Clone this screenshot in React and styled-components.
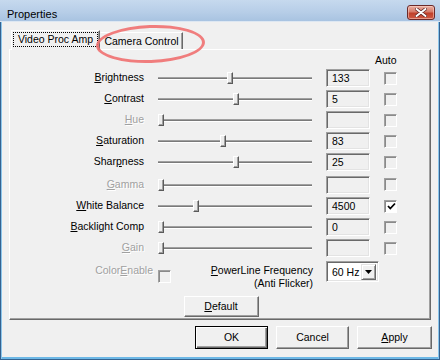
import styled, { createGlobalStyle } from "styled-components";

const GlobalStyle = createGlobalStyle`
  html, body { margin: 0; padding: 0; background: #f0f0f0; }
  body {
    font-family: "Liberation Sans", Arial, sans-serif;
    font-size: 10.5px;
    color: #000;
  }
  * { box-sizing: border-box; }
`;

const controls = [
  { label: <><u>B</u>rightness</>, value: "133", pos: 0.466 },
  { label: <><u>C</u>ontrast</>, value: "5", pos: 0.507 },
  { label: <><u>H</u>ue</>, disabled: true, pos: 0 },
  { label: <><u>S</u>aturation</>, value: "83", pos: 0.419 },
  { label: <>Shar<u>p</u>ness</>, value: "25", pos: 0.507 },
  { label: <><u>G</u>amma</>, disabled: true, pos: 0 },
  { label: <><u>W</u>hite Balance</>, value: "4500", pos: 0.236, auto: true },
  { label: <><u>B</u>acklight Comp</>, value: "0", pos: 0 },
  { label: <><u>G</u>ain</>, disabled: true, pos: 0 },
];

const App = () => {
  return (
    <>
      <GlobalStyle />
      <Window>
        <TitleBar>
          <Title>Properties</Title>
          <CloseButton>
            <svg width="12" height="9" viewBox="0 0 12 9">
              <path d="M1.5 1 L10.5 8 M10.5 1 L1.5 8" stroke="#5a2020" strokeWidth="3.4" strokeLinecap="round" />
              <path d="M1.5 1 L10.5 8 M10.5 1 L1.5 8" stroke="#fff" strokeWidth="2" strokeLinecap="round" />
            </svg>
          </CloseButton>
        </TitleBar>

        <Body>
          <TabStrip>
            <Tab $active>
              <Focus>Video Proc Amp</Focus>
            </Tab>
            <Tab>Camera Control</Tab>
            <Highlight />
          </TabStrip>

          <Panel>
            <AutoHeader>Auto</AutoHeader>
            <ControlGrid>
              {controls.map((c, i) => (
                <Row key={i}>
                  <Label $disabled={c.disabled}>{c.label}</Label>
                  <Slider>
                    <Track />
                    <Thumb style={{ left: Math.round(c.pos * 148) }} />
                  </Slider>
                  <Edit>{c.value}</Edit>
                  <Check $checked={c.auto}>
                    {c.auto && (
                      <svg width="9" height="9" viewBox="0 0 9 9">
                        <path d="M1 4 L3.3 6.5 L8 1.5" stroke="#000" strokeWidth="1.8" fill="none" />
                      </svg>
                    )}
                  </Check>
                </Row>
              ))}
            </ControlGrid>

            <ExtraRow>
              <ColorLabel>Color<u>E</u>nable</ColorLabel>
              <Check $flat />
              <PowerLabel>
                <span><u>P</u>owerLine Frequency</span>
                <span>(Anti Flicker)</span>
              </PowerLabel>
              <Select>
                <span>60 Hz</span>
                <DropButton>
                  <svg width="7" height="4" viewBox="0 0 7 4">
                    <path d="M0 0 H7 L3.5 4 Z" fill="#000" />
                  </svg>
                </DropButton>
              </Select>
            </ExtraRow>

            <DefaultRow>
              <Button $w={75}><u>D</u>efault</Button>
            </DefaultRow>
          </Panel>

          <ButtonBar>
            <Button $w={73} $default>OK</Button>
            <Button $w={73}>Cancel</Button>
            <Button $w={75}><u>A</u>pply</Button>
          </ButtonBar>
        </Body>
      </Window>
    </>
  );
};

export default App;

const Window = styled.div`
  position: relative;
  width: 440px;
  height: 360px;
  background: #f0f0f0;
  border: 1px solid #35628f;
  border-top: none;
  box-shadow: inset 1px 0 #8cc6ec, inset -1px 0 #8cc6ec, inset 0 -2px #6db8e6;
  display: flex;
  flex-direction: column;
`;

const TitleBar = styled.div`
  height: 22px;
  flex-shrink: 0;
  display: flex;
  align-items: flex-start;
  justify-content: space-between;
  background: linear-gradient(180deg, #c6d9ee 0%, #b6cde7 60%, #a8c3e1 100%);
  border-bottom: 1px solid #dde7f2;
  margin: 0 -1px;
  padding: 0 5px 0 7px;
`;

const Title = styled.div`
  margin-top: 8px;
  line-height: 13px;
  font-size: 11px;
`;

const CloseButton = styled.div`
  margin-top: 5px;
  width: 28px;
  height: 15px;
  border: 1px solid #6b2a2a;
  border-radius: 3px;
  background: linear-gradient(180deg, #eab0a4 0%, #d67a68 45%, #c0402a 55%, #cf5a44 100%);
  box-shadow: inset 0 0 0 1px rgba(255, 220, 210, 0.5);
  display: flex;
  align-items: center;
  justify-content: center;
`;

const Body = styled.div`
  padding: 0 8px;
  display: flex;
  flex-direction: column;
`;

const TabStrip = styled.div`
  position: relative;
  height: 27px;
  flex-shrink: 0;
  display: flex;
  align-items: flex-end;
  padding-left: 2px;
`;

/* red hand-drawn ring laid over the second tab */
const Highlight = styled.div`
  position: absolute;
  left: 87px;
  top: 3px;
  width: 109px;
  height: 38px;
  border: 3.5px solid rgba(240, 112, 112, 0.9);
  border-radius: 50%;
  transform: rotate(-2deg);
  z-index: 5;
  pointer-events: none;
`;

const Tab = styled.div`
  position: relative;
  z-index: ${(p) => (p.$active ? 2 : 1)};
  width: ${(p) => (p.$active ? 89 : 83)}px;
  height: ${(p) => (p.$active ? 20 : 17)}px;
  margin-bottom: ${(p) => (p.$active ? -1 : 0)}px;
  background: #f0f0f0;
  border-top: 1px solid #fff;
  border-left: 1px solid ${(p) => (p.$active ? "#fff" : "transparent")};
  border-right: 1px solid #696969;
  box-shadow: inset -1px 0 #a0a0a0;
  display: flex;
  justify-content: center;
  padding-top: ${(p) => (p.$active ? 1 : 2)}px;
  line-height: 13px;
  white-space: nowrap;
`;

const Focus = styled.div`
  width: 85px;
  height: 15px;
  border: 1px dotted #000;
  text-align: center;
  line-height: 13px;
`;

const Panel = styled.div`
  height: 271px;
  flex-shrink: 0;
  border-top: 1px solid #fff;
  border-left: 1px solid #fff;
  border-right: 1px solid #696969;
  border-bottom: 1px solid #696969;
  box-shadow: inset -1px -1px #a0a0a0;
  display: flex;
  flex-direction: column;
`;

const AutoHeader = styled.div`
  height: 19px;
  padding: 4px 0 0 365px;
  line-height: 13px;
`;

const ControlGrid = styled.div`
  display: grid;
  grid-template-columns: 134px 154px 44px 13px;
  grid-template-rows: repeat(5, 18px) 20px repeat(3, 18px);
  align-items: end;
  column-gap: 14px;
  row-gap: 3px;
`;

const Row = styled.div`
  display: contents;
`;

const Label = styled.div`
  height: 18px;
  line-height: 16px;
  text-align: right;
  white-space: nowrap;
  color: ${(p) => (p.$disabled ? "#a0a0a0" : "#000")};
  text-shadow: ${(p) => (p.$disabled ? "1px 1px 0 #fff" : "none")};
`;

const Slider = styled.div`
  position: relative;
  height: 18px;
  display: flex;
  align-items: center;
`;

const Track = styled.div`
  width: 100%;
  height: 3px;
  background: #7a7a7a;
  border-top: 1px solid #a0a0a0;
  border-bottom: 1px solid #fff;
`;

const Thumb = styled.div`
  position: absolute;
  top: 3px;
  width: 6px;
  height: 12px;
  background: #ececec;
  border-top: 1px solid #fff;
  border-left: 1px solid #fff;
  border-right: 1px solid #5a5a5a;
  border-bottom: 1px solid #5a5a5a;
  box-shadow: inset -1px -1px #a0a0a0;
`;

const Edit = styled.div`
  height: 18px;
  border-top: 1px solid #a0a0a0;
  border-left: 1px solid #a0a0a0;
  border-right: 1px solid #fff;
  border-bottom: 1px solid #fff;
  box-shadow: inset 1px 1px #696969, inset -1px -1px #e3e3e3;
  padding-left: 5px;
  line-height: 16px;
  background: #f0f0f0;
`;

const Check = styled.div`
  align-self: center;
  margin-left: ${(p) => (p.$flat ? 5 : 0)}px;
  margin-top: ${(p) => (p.$flat ? 2 : 0)}px;
  width: 13px;
  height: 13px;
  border-top: 1px solid #a0a0a0;
  border-left: 1px solid #a0a0a0;
  border-right: 1px solid #fff;
  border-bottom: 1px solid #fff;
  box-shadow: inset 1px 1px #8a8a8a;
  background: ${(p) => (p.$checked ? "#fff" : "#f0f0f0")};
  display: flex;
  align-items: center;
  justify-content: center;
  padding: 1px 0 0 1px;
`;

const ExtraRow = styled.div`
  margin-top: 4px;
  display: flex;
  align-items: flex-start;
`;

const ColorLabel = styled.div`
  width: 143px;
  margin-top: 3px;
  line-height: 13px;
  text-align: right;
  color: #a0a0a0;
  text-shadow: 1px 1px 0 #fff;
`;

const PowerLabel = styled.div`
  width: 106px;
  margin: 3px 0 0 36px;
  display: flex;
  flex-direction: column;
  align-items: flex-end;
  line-height: 13px;
  white-space: nowrap;
`;

const Select = styled.div`
  margin-left: 13px;
  width: 53px;
  height: 21px;
  border-top: 1px solid #a0a0a0;
  border-left: 1px solid #a0a0a0;
  border-right: 1px solid #fff;
  border-bottom: 1px solid #fff;
  box-shadow: inset 1px 1px #696969, inset -1px -1px #e3e3e3;
  background: #fff;
  display: flex;
  align-items: center;
  justify-content: space-between;
  padding: 2px 2px 2px 5px;
`;

const DropButton = styled.div`
  width: 15px;
  height: 16px;
  background: #f0f0f0;
  border-top: 1px solid #e3e3e3;
  border-left: 1px solid #e3e3e3;
  border-right: 1px solid #696969;
  border-bottom: 1px solid #696969;
  box-shadow: inset 1px 1px #fff, inset -1px -1px #a0a0a0;
  display: flex;
  align-items: center;
  justify-content: center;
`;

const DefaultRow = styled.div`
  margin-top: 6px;
  display: flex;
  justify-content: center;
  padding-left: 2px;
`;

const Button = styled.div`
  width: ${(p) => p.$w}px;
  height: ${(p) => (p.$default ? 23 : 21)}px;
  background: #f0f0f0;
  border: 1px solid;
  border-color: ${(p) => (p.$default ? "#000" : "#fff #696969 #696969 #fff")};
  box-shadow: ${(p) =>
    p.$default
      ? "inset 1px 1px #fff, inset -1px -1px #696969, inset -2px -2px #a0a0a0"
      : "inset -1px -1px #a0a0a0"};
  display: flex;
  align-items: center;
  justify-content: center;
  line-height: 13px;
`;

const ButtonBar = styled.div`
  margin-top: 6px;
  display: flex;
  justify-content: flex-end;
  align-items: center;
  gap: 8px;
  margin-right: -1px;

  & > div {
    height: 23px;
  }
`;
